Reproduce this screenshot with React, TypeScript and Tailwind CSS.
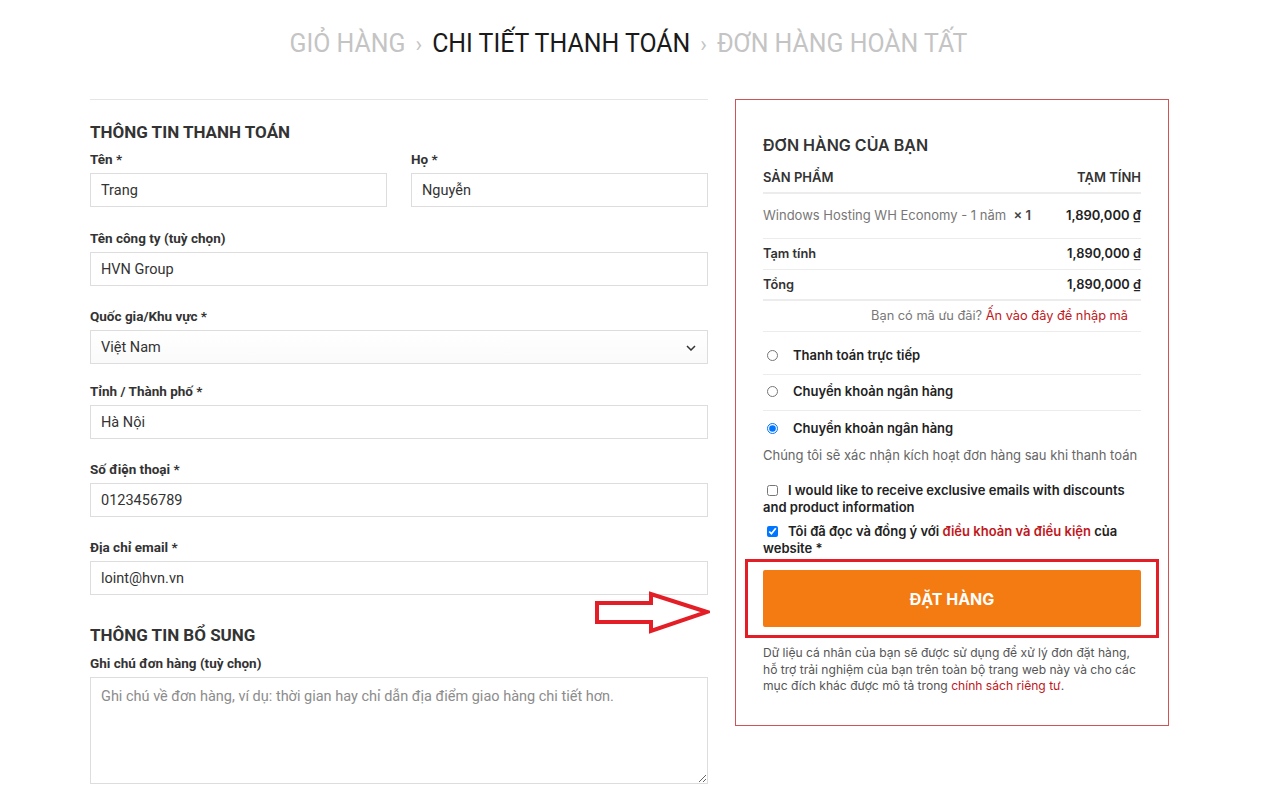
import { useState } from 'react';

type Field = { label: string; value: string; mt: string };

const fields: Field[] = [
  { label: 'Tên công ty (tuỳ chọn)', value: 'HVN Group', mt: 'mt-[21px]' },
  { label: 'Tỉnh / Thành phố *', value: 'Hà Nội', mt: 'mt-[17px]' },
  { label: 'Số điện thoại *', value: '0123456789', mt: 'mt-[20px]' },
  { label: 'Địa chỉ email *', value: 'loint@hvn.vn', mt: 'mt-[20px]' },
];

const inputCls =
  'h-[34px] w-full border border-[#dddddd] bg-white px-[10px] pt-[1px] text-[14.5px] text-[#333] outline-none';

function Label({ children }: { children: string }) {
  return <div className="mb-[4px] text-[13.5px] leading-[20px] font-bold text-[#333]">{children}</div>;
}

function TextField({ label, value, mt }: Field) {
  return (
    <div className={mt}>
      <Label>{label}</Label>
      <input className={inputCls} defaultValue={value} />
    </div>
  );
}

function Arrow() {
  return (
    <svg className="absolute left-[594px] top-[591px]" width="116" height="44" viewBox="0 0 116 44">
      <path
        d="M3 12 H57 V3 L113 21 L57 40 V31 H3 Z"
        fill="white"
        stroke="#e41e26"
        strokeWidth="4"
        strokeLinejoin="miter"
      />
    </svg>
  );
}

export default function App() {
  const [payment, setPayment] = useState('bank2');

  return (
    <div className="relative min-h-[800px] bg-white font-['Roboto',sans-serif]">
      <div className="flex h-[86px] items-center justify-center pt-[2px] pr-[17px] text-[24.9px] text-[#c4c4c4]">
        <span>GIỎ HÀNG</span>
        <span className="mx-[10px] text-[22px]">›</span>
        <span className="text-[#1a1a1a]">CHI TIẾT THANH TOÁN</span>
        <span className="mx-[10px] text-[22px]">›</span>
        <span>ĐƠN HÀNG HOÀN TẤT</span>
      </div>

      <div className="ml-[90px] mt-[13px] flex w-[1079px] items-start gap-[27px]">
        <form className="w-[618px] border-t border-[#e5e5e5]" onSubmit={(e) => e.preventDefault()}>
          <h3 className="mt-[20px] text-[17px] leading-[24px] font-bold text-[#333]">THÔNG TIN THANH TOÁN</h3>
          <div className="mt-[5px] flex gap-[24px]">
            <div className="w-[297px]">
              <Label>Tên *</Label>
              <input className={inputCls} defaultValue="Trang" />
            </div>
            <div className="flex-1">
              <Label>Họ *</Label>
              <input className={inputCls} defaultValue="Nguyễn" />
            </div>
          </div>

          <TextField {...fields[0]} />

          <div className="mt-[20px]">
            <Label>Quốc gia/Khu vực *</Label>
            <div className="flex h-[34px] items-center justify-between border border-[#dddddd] bg-gradient-to-b from-white to-[#fafafa] pr-[11px] pl-[10px] pt-[2px] text-[14.5px] text-[#333]">
              <span>Việt Nam</span>
              <svg width="10" height="6" viewBox="0 0 10 6">
                <path d="M1 1 L5 5 L9 1" fill="none" stroke="#333" strokeWidth="1.5" />
              </svg>
            </div>
          </div>

          {fields.slice(1).map((f) => (
            <TextField key={f.label} {...f} />
          ))}

          <h3 className="mt-[28px] text-[17px] leading-[24px] font-bold text-[#333]">THÔNG TIN BỔ SUNG</h3>
          <div className="mt-[6px]">
            <Label>Ghi chú đơn hàng (tuỳ chọn)</Label>
            <textarea
              className="block h-[107px] w-full border border-[#dddddd] px-[10px] py-[8px] text-[14.5px] text-[#333] outline-none placeholder:text-[#8c8c8c]"
              placeholder="Ghi chú về đơn hàng, ví dụ: thời gian hay chỉ dẫn địa điểm giao hàng chi tiết hơn."
            />
          </div>
        </form>

        <div className="h-[627px] w-[434px] border border-[#cf5454] px-[27px] pt-[33px] font-['Inter',sans-serif] text-[#333]">
          <h3 className="text-[16px] leading-[24px] font-semibold text-[#333]">ĐƠN HÀNG CỦA BẠN</h3>

          <div className="mt-[6px] flex h-[31px] items-center justify-between border-b-2 border-[#ececec] text-[13px] font-semibold text-[#333]">
            <span>SẢN PHẨM</span>
            <span>TẠM TÍNH</span>
          </div>
          <div className="flex h-[45px] items-center justify-between border-b border-[#ececec] text-[13px]">
            <span className="text-[#777]">
              Windows Hosting WH Economy - 1 năm&nbsp; <span className="font-semibold text-[#444]">× 1</span>
            </span>
            <span className="font-semibold text-[#222]">1,890,000 ₫</span>
          </div>
          <div className="flex h-[31px] items-center justify-between border-b border-[#ececec] text-[12.8px] font-semibold">
            <span className="text-[#333]">Tạm tính</span>
            <span className="text-[#222]">1,890,000 ₫</span>
          </div>
          <div className="flex h-[31px] items-center justify-between border-b-2 border-[#ececec] text-[12.8px] font-semibold">
            <span className="text-[#333]">Tổng</span>
            <span className="text-[#222]">1,890,000 ₫</span>
          </div>
          <div className="flex h-[31px] items-center justify-end border-b border-[#ececec] pr-[13px] text-[12.8px] text-[#777]">
            Bạn có mã ưu đãi?&nbsp;<span className="text-[#c0171c]">Ấn vào đây để nhập mã</span>
          </div>

          <div className="pt-[7px]">
            {[
              { id: 'cod', label: 'Thanh toán trực tiếp' },
              { id: 'bank1', label: 'Chuyển khoản ngân hàng' },
              { id: 'bank2', label: 'Chuyển khoản ngân hàng' },
            ].map((p, i) => (
              <label
                key={p.id}
                className={`flex items-center gap-[15px] text-[13px] leading-[20px] font-semibold text-[#222] ${
                  i < 2 ? 'border-b border-[#ececec] pt-[6px] pb-[9px]' : 'pt-[7px] pb-[7px]'
                }`}
              >
                <input
                  type="radio"
                  name="pay"
                  className="ml-[4px] h-[11px] w-[11px]"
                  checked={payment === p.id}
                  onChange={() => setPayment(p.id)}
                />
                {p.label}
              </label>
            ))}
            <p className="text-[13px] leading-[20px] text-[#666]">Chúng tôi sẽ xác nhận kích hoạt đơn hàng sau khi thanh toán</p>
          </div>

          <p className="mt-[17px] text-[13px] leading-[17px] font-semibold text-[#222]">
            <input type="checkbox" className="mr-[10px] ml-[4px] h-[11px] w-[11px] align-[-1px]" />
            I would like to receive exclusive emails with discounts and product information
          </p>
          <p className="mt-[7px] text-[13px] leading-[17px] font-semibold text-[#222]">
            <input type="checkbox" defaultChecked className="mr-[10px] ml-[4px] h-[11px] w-[11px] align-[-1px]" />
            Tôi đã đọc và đồng ý với <span className="text-[#c0171c]">điều khoản và điều kiện</span> của website *
          </p>

          <div className="-mx-[18px] mt-[2px] border-[3px] border-[#e41e26] px-[15px] py-[8px]">
            <button className="flex h-[57px] w-full items-center justify-center rounded-[2px] bg-[#f47a12] text-[16px] font-bold text-white">
              ĐẶT HÀNG
            </button>
          </div>

          <p className="mt-[7px] text-[12.1px] leading-[16.5px] text-[#555]">
            Dữ liệu cá nhân của bạn sẽ được sử dụng để xử lý đơn đặt hàng, hỗ trợ trải nghiệm của bạn trên toàn bộ trang web này và cho các mục đích khác được mô tả trong{' '}
            <span className="text-[#c0171c]">chính sách riêng tư</span>.
          </p>
        </div>
      </div>

      <Arrow />
    </div>
  );
}
